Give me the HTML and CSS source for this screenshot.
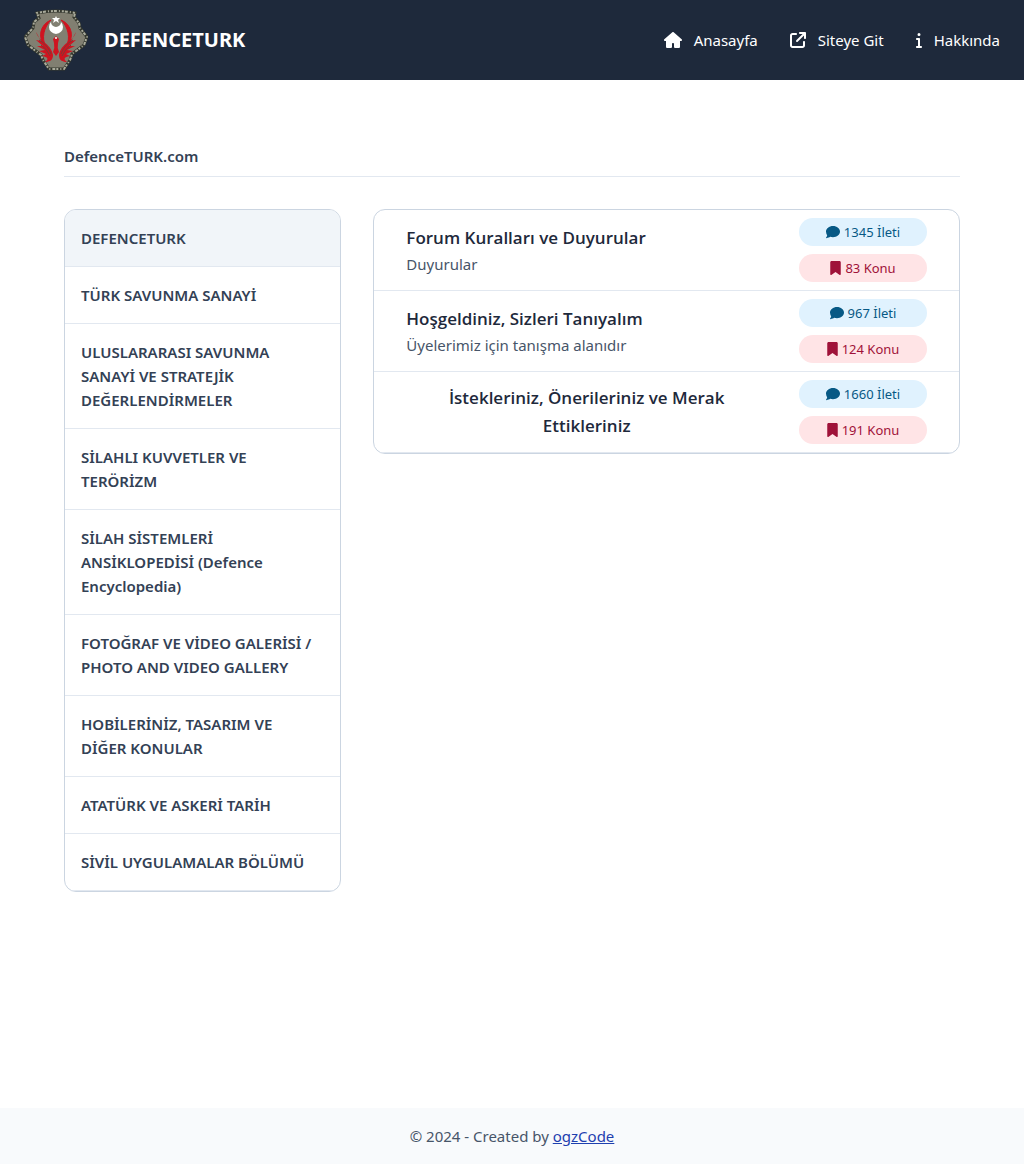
FILE: index.html
```html
<!DOCTYPE html>
<html lang="tr">
<head>
<meta charset="utf-8">
<meta name="viewport" content="width=device-width, initial-scale=1">
<title>DefenceTURK</title>
<link rel="stylesheet" href="styles.css">
</head>
<body>
<svg class="sprite" aria-hidden="true">
  <symbol id="comment" viewBox="0 0 512 512"><path d="M512 240c0 114.900-114.600 208-256 208-37.100 0-72.300-6.400-104.100-17.900-11.900 8.700-31.300 20.600-54.300 30.600C73.600 471.100 44.700 480 16 480c-6.500 0-12.300-3.900-14.800-9.900s-1.100-12.800 3.400-17.400l.3-.3.700-.8c.7-.7 1.700-1.900 3.100-3.500 2.700-3.100 6.500-7.700 10.700-13.800 8.300-11.300 17.600-27.200 24.500-46.400C16.300 336.400 0 290.300 0 240 0 125.100 114.600 32 256 32s256 93.100 256 208z"/></symbol>
  <symbol id="bookmark" viewBox="0 0 384 512"><path d="M0 48v439.700C0 501.100 10.900 512 24.300 512c5 0 9.900-1.500 14-4.400L192 400l153.700 107.600c4.100 2.900 9 4.400 14 4.400 13.400 0 24.300-10.900 24.300-24.300V48c0-26.500-21.500-48-48-48H48C21.500 0 0 21.500 0 48z"/></symbol>
</svg>

<header class="topbar">
  <a class="brand" href="#">
    <svg class="logo" viewBox="0 0 64 64" aria-hidden="true">
      <path class="shield" d="M13 5Q32 1 51 5L50 9L55 15L56 20L63 29L60 37L48 46L46 52L40 61H25L19 52L17 47L4 37L1 29L9 20L10 14L15 10Z"/>
      <path class="rim-dark" d="M13 5Q32 1 51 5L50 9L55 15L56 20L63 29L60 37L48 46L46 52L40 61H25L19 52L17 47L4 37L1 29L9 20L10 14L15 10Z"/>
      <path class="rim-light" d="M13 5Q32 1 51 5L50 9L55 15L56 20L63 29L60 37L48 46L46 52L40 61H25L19 52L17 47L4 37L1 29L9 20L10 14L15 10Z"/>
      <path class="ring" d="M27 12A16 16 0 0 0 22 39C17 30 20 19 27 12ZM37 12A16 16 0 0 1 42 39C47 30 44 19 37 12Z"/>
      <path class="wing" d="M12 24C14 33 27 35 29 47C29 52 26 54 21 54C25 51 24 49 18 48L22 46L15 43L21 42L13 38L19 38L12 32L17 33Z"/>
      <path class="wing" d="M52 24C50 33 37 35 35 47C35 52 38 54 43 54C39 51 40 49 46 48L42 46L49 43L43 42L51 38L45 38L52 32L47 33Z"/>
      <path class="wing" d="M32 28L35 31L34 35Q33 40 35 44L32 48L29 44Q31 40 30 35L29 31Z"/>
      <path class="feather" d="M15 32Q24 37 27 46M17 37Q23 41 26 48M49 32Q40 37 37 46M47 37Q41 41 38 48"/>
      <path class="crescent" d="M27 14A7 7 0 1 0 37 14A5 5 0 1 1 27 14Z"/>
      <path class="crescent" d="M32 8L33 10H36L34 12L35 15L32 13L29 15L30 12L28 10H31Z"/>
      <circle class="crescent" cx="32" cy="30" r="1"/>
    </svg>
    <span>DEFENCETURK</span>
  </a>
  <nav class="menu">
    <a href="#">
      <svg class="icon home" viewBox="0 0 576 512" aria-hidden="true"><path d="M575.800 255.500c0 18-15 32.100-32 32.100h-32l.7 160.200c0 2.700-.2 5.400-.5 8.100V472c0 22.100-17.900 40-40 40H360c-22.100 0-40-17.900-40-40v-88c0-17.700-14.300-32-32-32h0c-17.700 0-32 14.300-32 32v88c0 22.100-17.900 40-40 40H104c-22.100 0-40-17.900-40-40V287.600H32c-18 0-32-14-32-32.100 0-9 3-17 10-24L266.400 8c7-7 15-8 22-8s15 2 21 7l255.400 224.500c8 7 12 15 11 24z"/></svg>
      Anasayfa
    </a>
    <a href="#">
      <svg class="icon" viewBox="0 0 512 512" aria-hidden="true"><path d="M320 0c-17.700 0-32 14.300-32 32s14.300 32 32 32h82.700L201.400 265.400c-12.500 12.500-12.500 32.800 0 45.300s32.800 12.500 45.300 0L448 109.300V192c0 17.700 14.300 32 32 32s32-14.300 32-32V32c0-17.700-14.300-32-32-32H320zM80 32C35.800 32 0 67.800 0 112v320c0 44.200 35.800 80 80 80h320c44.200 0 80-35.800 80-80V320c0-17.700-14.300-32-32-32s-32 14.300-32 32v112c0 8.800-7.200 16-16 16H80c-8.800 0-16-7.200-16-16V112c0-8.800 7.200-16 16-16h112c17.700 0 32-14.300 32-32s-14.300-32-32-32H80z"/></svg>
      Siteye Git
    </a>
    <a href="#">
      <svg class="icon info" viewBox="0 0 192 512" aria-hidden="true"><path d="M48 80a48 48 0 1 1 96 0 48 48 0 1 1-96 0zM0 224c0-17.700 14.300-32 32-32h64c17.700 0 32 14.300 32 32v224h32c17.700 0 32 14.300 32 32s-14.300 32-32 32H32c-17.700 0-32-14.300-32-32s14.300-32 32-32h32V256H32c-17.700 0-32-14.300-32-32z"/></svg>
      Hakkında
    </a>
  </nav>
</header>

<main class="page">
  <h1 class="site-title">DefenceTURK.com</h1>
  <div class="columns">
    <nav class="panel categories">
      <button type="button" class="active">DEFENCETURK</button>
      <button type="button">TÜRK SAVUNMA SANAYİ</button>
      <button type="button">ULUSLARARASI SAVUNMA SANAYİ VE STRATEJİK DEĞERLENDİRMELER</button>
      <button type="button">SİLAHLI KUVVETLER VE TERÖRİZM</button>
      <button type="button">SİLAH SİSTEMLERİ ANSİKLOPEDİSİ (Defence Encyclopedia)</button>
      <button type="button">FOTOĞRAF VE VİDEO GALERİSİ / PHOTO AND VIDEO GALLERY</button>
      <button type="button">HOBİLERİNİZ, TASARIM VE DİĞER KONULAR</button>
      <button type="button">ATATÜRK VE ASKERİ TARİH</button>
      <button type="button">SİVİL UYGULAMALAR BÖLÜMÜ</button>
    </nav>
    <section class="panel forums">
      <article class="forum">
        <div class="summary">
          <button type="button" class="forum-name">Forum Kuralları ve Duyurular</button>
          <p>Duyurular</p>
        </div>
        <div class="stats">
          <span class="badge posts"><svg class="badge-icon" aria-hidden="true"><use href="#comment"/></svg>1345 İleti</span>
          <span class="badge topics"><svg class="badge-icon narrow" aria-hidden="true"><use href="#bookmark"/></svg>83 Konu</span>
        </div>
      </article>
      <article class="forum">
        <div class="summary">
          <button type="button" class="forum-name">Hoşgeldiniz, Sizleri Tanıyalım</button>
          <p>Üyelerimiz için tanışma alanıdır</p>
        </div>
        <div class="stats">
          <span class="badge posts"><svg class="badge-icon" aria-hidden="true"><use href="#comment"/></svg>967 İleti</span>
          <span class="badge topics"><svg class="badge-icon narrow" aria-hidden="true"><use href="#bookmark"/></svg>124 Konu</span>
        </div>
      </article>
      <article class="forum">
        <div class="summary">
          <button type="button" class="forum-name">İstekleriniz, Önerileriniz ve Merak Ettikleriniz</button>
        </div>
        <div class="stats">
          <span class="badge posts"><svg class="badge-icon" aria-hidden="true"><use href="#comment"/></svg>1660 İleti</span>
          <span class="badge topics"><svg class="badge-icon narrow" aria-hidden="true"><use href="#bookmark"/></svg>191 Konu</span>
        </div>
      </article>
    </section>
  </div>
</main>

<footer class="footer">© 2024 - Created by <a href="#">ogzCode</a></footer>
</body>
</html>
```
FILE: styles.css
```css
* { box-sizing: border-box; }

body {
  margin: 0;
  min-height: 100vh;
  display: flex;
  flex-direction: column;
  background: #fff;
  color: #475569;
  font: 15px/24px "Segoe UI", "Noto Sans", sans-serif;
}

h1, p { margin: 0; }

button {
  border: 0;
  padding: 0;
  background: none;
  color: inherit;
  font: inherit;
  cursor: pointer;
}

svg { fill: currentColor; flex: none; }
.sprite { display: none; }

.topbar {
  display: flex;
  align-items: center;
  justify-content: space-between;
  height: 80px;
  padding: 0 24px;
  background: #1e293b;
  color: #fff;
}

.topbar a { color: inherit; text-decoration: none; }

.brand {
  display: flex;
  align-items: center;
  gap: 16px;
  font-size: 20px;
  line-height: 28px;
  font-weight: 700;
}

.logo { width: 64px; height: 64px; }
.shield { fill: #817f71; }
.rim-dark, .rim-light, .feather { fill: none; }
.rim-dark { stroke: #35382f; stroke-width: 3; }
.rim-light { stroke: #a9aa9b; stroke-width: 2; stroke-dasharray: 1 2 2 1 3 2; }
.ring, .wing { fill: #cf1420; }
.ring { stroke: #cf1420; stroke-width: 1; }
.feather { stroke: #7d3a35; stroke-width: 1; }
.crescent { fill: #fff; }

.menu { display: flex; gap: 32px; }
.menu a { display: flex; align-items: center; gap: 12px; }
.icon { width: 16px; height: 16px; }
.icon.home { width: 18px; }
.icon.info { width: 6px; }

.page { flex: 1; padding: 64px; }

.site-title {
  padding-bottom: 8px;
  border-bottom: 1px solid #e2e8f0;
  margin-bottom: 32px;
  color: #334155;
  font-size: 15px;
  line-height: 24px;
  font-weight: 600;
}

.columns {
  display: grid;
  grid-template-columns: repeat(3, 1fr);
  align-items: start;
  gap: 32px;
}

.panel {
  border: 1px solid #cbd5e1;
  border-radius: 12px;
  overflow: hidden;
}

.categories { display: flex; flex-direction: column; }

.categories button {
  padding: 16px 24px 16px 16px;
  border-bottom: 1px solid #e2e8f0;
  color: #334155;
  font-weight: 600;
  text-align: left;
}

.categories .active { background: #f1f5f9; }

.forums { grid-column: span 2; }

.forum {
  display: flex;
  align-items: center;
  gap: 32px;
  padding: 8px 32px;
  border-bottom: 1px solid #e2e8f0;
}

.summary { flex: 1; }

.forum-name {
  color: #1e293b;
  font-family: "Segoe UI", "Open Sans", sans-serif;
  font-size: 17px;
  line-height: 28px;
  font-weight: 600;
}

.stats { display: flex; flex-direction: column; gap: 8px; width: 128px; }

.badge {
  display: flex;
  align-items: center;
  justify-content: center;
  gap: 4px;
  padding: 4px;
  border-radius: 14px;
  font-size: 13px;
  line-height: 20px;
}

.badge-icon { width: 14px; height: 14px; }
.badge-icon.narrow { width: 11px; }
.posts { background: #e0f2fe; color: #075985; }
.topics { background: #ffe4e6; color: #9f1239; }

.footer {
  padding: 16px;
  background: #f8fafc;
  text-align: center;
}

.footer a { color: #1e40af; }
```
